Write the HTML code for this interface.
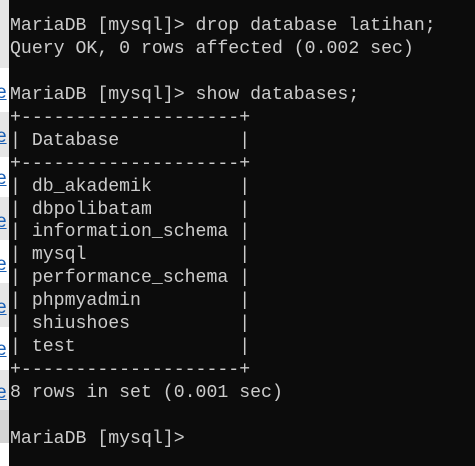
<!DOCTYPE html>
<html><head><meta charset="utf-8"><style>
html,body{margin:0;padding:0;}
body{width:475px;height:466px;background:#0c0c0c;position:relative;overflow:hidden;}
#strip{position:absolute;left:0;top:0;width:9px;height:466px;background:#fff;overflow:hidden;}
.b{position:absolute;left:0;width:9px;}
.e{position:absolute;left:-4px;font:19px "Liberation Sans",sans-serif;color:#1a5fb4;text-decoration:underline;line-height:20px;}
pre{position:absolute;left:10px;top:15px;margin:0;font-family:"Liberation Mono",monospace;font-size:18.2px;line-height:22.93px;color:#cccccc;}
</style></head><body>
<div id="strip">
<div class="b" style="top:0;height:68px;background:#e6e6e6"></div>
<div class="b" style="top:112px;height:45px;background:#e6e6e6"></div>
<div class="b" style="top:197px;height:43px;background:#e6e6e6"></div>
<div class="b" style="top:283px;height:44px;background:#e6e6e6"></div>
<div class="b" style="top:370px;height:40px;background:#e6e6e6"></div>
<div class="b" style="top:410px;height:33px;background:#d4d4d4"></div>
<span class="e" style="top:83px">e</span>
<span class="e" style="top:127px">e</span>
<span class="e" style="top:169px">e</span>
<span class="e" style="top:212px">e</span>
<span class="e" style="top:255px">e</span>
<span class="e" style="top:298px">e</span>
<span class="e" style="top:340px">e</span>
<span class="e" style="top:383px">e</span>
</div>
<pre>MariaDB [mysql]&gt; drop database latihan;
Query OK, 0 rows affected (0.002 sec)

MariaDB [mysql]&gt; show databases;
+--------------------+
| Database           |
+--------------------+
| db_akademik        |
| dbpolibatam        |
| information_schema |
| mysql              |
| performance_schema |
| phpmyadmin         |
| shiushoes          |
| test               |
+--------------------+
8 rows in set (0.001 sec)

MariaDB [mysql]&gt;</pre>
</body></html>
